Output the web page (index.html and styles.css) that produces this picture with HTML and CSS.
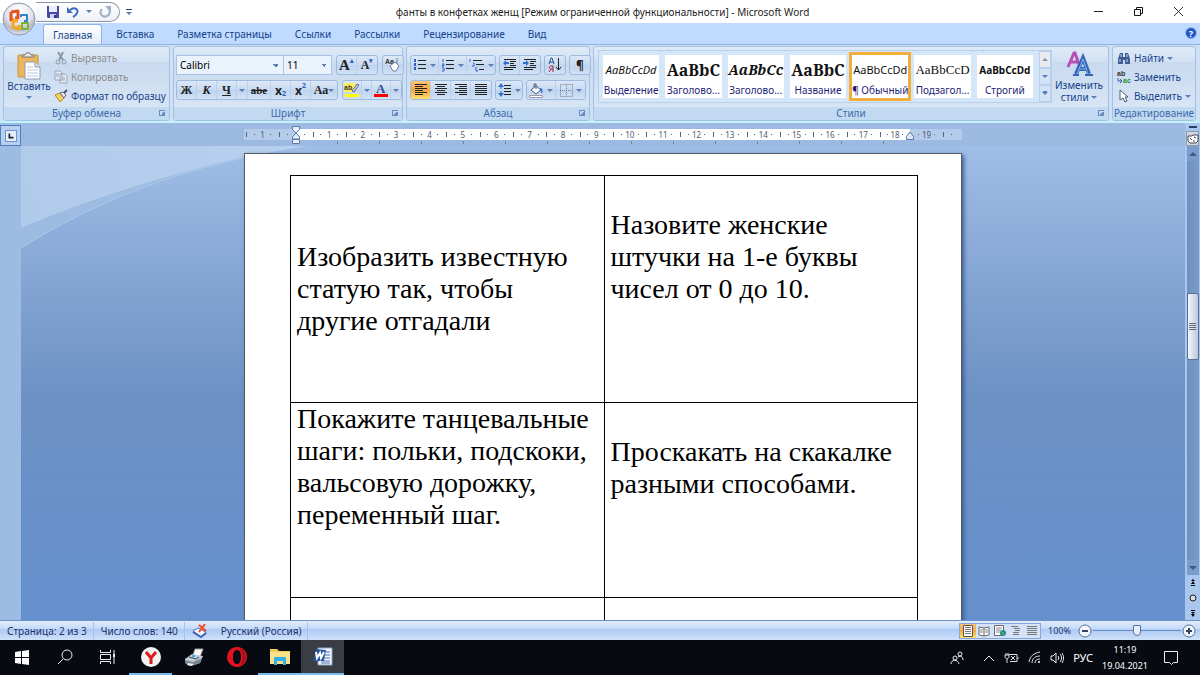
FILE: index.html
```html
<!DOCTYPE html>
<html lang="ru">
<head>
    <meta charset="UTF-8">
    <meta name="viewport" content="width=device-width, initial-scale=1.0">
    <title>фанты в конфетках женщ - Microsoft Word</title>
    <link rel="stylesheet" href="styles.css">
</head>
<body>
    <header class="titlebar">
        <button class="office" aria-label="Office">
            <svg width="36" height="36" viewBox="0 0 36 36">
                <defs>
                    <radialGradient id="orb" cx="50%" cy="25%" r="75%">
                        <stop offset="0" stop-color="#fff"/>
                        <stop offset=".55" stop-color="#e3e6ec"/>
                        <stop offset=".8" stop-color="#b4bac8"/>
                        <stop offset="1" stop-color="#e8ebf2"/>
                    </radialGradient>
                </defs>
                <circle cx="18" cy="18" r="16" fill="url(#orb)" stroke="#8b95ab"/>
                <g fill="none" stroke-linejoin="round">
                    <path d="M10 11l7-1v7h-3M10 11v8h3" stroke="#e4531b" stroke-width="3"/>
                    <path d="M20 16v-2h6v6h-3" stroke="#2f86cf" stroke-width="2"/>
                    <path d="M17 20h-5v6l6 2v-4" stroke="#f3a81c" stroke-width="3"/>
                    <path d="M21 24v-2h6v6h-6z" stroke="#7fb32b" stroke-width="2"/>
                </g>
            </svg>
        </button>
        <div class="quick">
            <button aria-label="Сохранить">
                <svg width="14" height="14" viewBox="0 0 14 14"><path d="M1 1h12v12H2l-1-1z" fill="#4747a8"/><path d="M3 1h8v6H3z" fill="#e9effa"/><path d="M4 9h6v4H4z" fill="#cdd3e6"/><path d="M8 10h2v3H8z" fill="#33337d"/></svg>
            </button>
            <button aria-label="Отменить">
                <svg width="14" height="14" viewBox="0 0 14 14"><path d="M4 5c5-4 9 0 7 3-1 2-2 3-4 4" fill="none" stroke="#3a6cc4" stroke-width="2"/><path d="M1 2v6h6z" fill="#3a6cc4"/></svg>
            </button>
            <i class="arrow"></i>
            <button aria-label="Вернуть">
                <svg width="14" height="14" viewBox="0 0 14 14"><path d="M4 4c-4 5 1 9 5 7 4-2 3-6 1-8" fill="none" stroke="#9fb0cc" stroke-width="2"/><path d="M7 1h6v6z" fill="#9fb0cc"/></svg>
            </button>
        </div>
        <button class="more" aria-label="Настройка панели"><i class="arrow"></i></button>
        <h1 class="title">фанты в конфетках женщ [Режим ограниченной функциональности] - Microsoft Word</h1>
        <div class="winbtns">
            <button aria-label="Свернуть"><svg width="11" height="11" viewBox="0 0 11 11"><path d="M1 5.500h9" stroke="#222"/></svg></button>
            <button aria-label="Восстановить"><svg width="11" height="11" viewBox="0 0 11 11"><path d="M1.500 3.500h6v6h-6zM3.500 3.500v-2h6v6h-2" fill="none" stroke="#111"/></svg></button>
            <button aria-label="Закрыть"><svg width="11" height="11" viewBox="0 0 11 11"><path d="M1 1l9 9M10 1l-9 9" stroke="#333"/></svg></button>
        </div>
    </header>

    <nav class="tabs">
        <a href="#" class="active">Главная</a>
        <a href="#">Вставка</a>
        <a href="#">Разметка страницы</a>
        <a href="#">Ссылки</a>
        <a href="#">Рассылки</a>
        <a href="#">Рецензирование</a>
        <a href="#">Вид</a>
        <button class="help" aria-label="Справка">?</button>
    </nav>

    <div class="ribbon">
        <section class="group clipboard">
            <div class="group-body">
                <button class="big">
                    <svg width="26" height="28" viewBox="0 0 26 28"><rect x="2" y="3" width="20" height="22" rx="1" fill="#ebb75c" stroke="#c9923a"/><path d="M6 5h12V3h-3c0-3-6-3-6 0H6z" fill="#e5e5e5" stroke="#777"/><path d="M9 10h10l5 5v12H9z" fill="#fff" stroke="#8a9bb8"/><path d="M19 10v5h5" fill="#dbe6f5" stroke="#8a9bb8"/><path d="M11 15h6M11 18h11M11 21h11M11 24h11" stroke="#b9c8dd"/></svg>
                    <span>Вставить</span>
                    <i class="arrow"></i>
                </button>
                <div class="stack">
                    <button class="small" disabled>
                        <svg width="14" height="14" viewBox="0 0 14 14"><path d="M4 1l5 8M9 1L5 9" stroke="#8b97a8" stroke-width="2"/><circle cx="4" cy="11" r="2" fill="none" stroke="#8b97a8"/><circle cx="10" cy="11" r="2" fill="none" stroke="#8b97a8"/></svg>
                        Вырезать
                    </button>
                    <button class="small" disabled>
                        <svg width="14" height="14" viewBox="0 0 14 14"><path d="M1 1h5l2 2v7H1zM6 4h5l2 2v7H6z" fill="#e3e9f2" stroke="#98a6ba"/><path d="M8 8h3M8 10h3M2 4h3M2 6h3" stroke="#98a6ba"/></svg>
                        Копировать
                    </button>
                    <button class="small">
                        <svg width="14" height="14" viewBox="0 0 14 14"><path d="M1 6l5-2 4 5-4 4z" fill="#f3d06a" stroke="#b88a27"/><path d="M6 4l3-1 3 3-2 3z" fill="#ececec" stroke="#666"/><path d="M10 4l3-3" stroke="#4b4b8d" stroke-width="2"/></svg>
                        Формат по образцу
                    </button>
                </div>
            </div>
            <h2>Буфер обмена<i class="launcher"></i></h2>
        </section>

        <section class="group font">
            <div class="group-body rows">
                <div class="line">
                    <div class="combos">
                        <select class="font-name" aria-label="Шрифт"><option>Calibri</option></select>
                        <select class="font-size" aria-label="Размер шрифта"><option>11</option></select>
                    </div>
                    <div class="btns">
                        <button class="serif grow" aria-label="Увеличить размер">A<sup>▴</sup></button>
                        <button class="serif shrink" aria-label="Уменьшить размер">A<sup>▾</sup></button>
                    </div>
                    <div class="btns">
                        <button aria-label="Очистить формат"><svg width="16" height="16" viewBox="0 0 16 16"><text x="0" y="7" class="tiny">Aa</text><path d="M5 9l5-4 4 4-3 5H8z" fill="#fff" stroke="#6d7f9d"/><path d="M12 1v6" stroke="#6d7f9d"/></svg></button>
                    </div>
                </div>
                <div class="line">
                    <div class="btns">
                        <button class="serif">Ж</button>
                        <button class="serif"><em>К</em></button>
                        <button class="serif"><u>Ч</u></button>
                        <button class="drop" aria-label="Вид подчеркивания"><i class="arrow"></i></button>
                        <button class="serif strike">abe</button>
                        <button>x<sub>2</sub></button>
                        <button>x<sup>2</sup></button>
                        <button class="serif case">Aa<i class="arrow"></i></button>
                    </div>
                    <div class="btns colors">
                        <button aria-label="Цвет выделения"><svg width="17" height="16" viewBox="0 0 17 16"><path d="M0 1h11v9H0z" fill="#ffef5a"/><text x="0" y="8" class="tiny">ab</text><path d="M8 9l5-7 2 1-5 7z" fill="#c9d4e8" stroke="#5b6d8c"/><path d="M1 12h14v3H1z" fill="#ff0"/></svg></button>
                        <button class="drop" aria-label="Выбрать цвет выделения"><i class="arrow"></i></button>
                        <button aria-label="Цвет текста"><svg width="15" height="16" viewBox="0 0 15 16"><text x="2" y="11" class="letter">A</text><path d="M0 12h14v3H0z" fill="#f00"/></svg></button>
                        <button class="drop" aria-label="Выбрать цвет текста"><i class="arrow"></i></button>
                    </div>
                </div>
            </div>
            <h2>Шрифт<i class="launcher"></i></h2>
        </section>

        <section class="group para">
            <div class="group-body rows">
                <div class="line">
                    <div class="btns">
                        <button aria-label="Маркеры"><svg width="14" height="14" viewBox="0 0 14 14"><path d="M5 2.500h8M5 6.500h8M5 10.500h8" stroke="#222"/><path d="M1 1h2v3H1zM1 5h2v3H1zM1 9h2v3H1z" fill="#2f5fc0"/></svg><i class="arrow"></i></button>
                        <button aria-label="Нумерация"><svg width="14" height="14" viewBox="0 0 14 14"><path d="M5 2.500h8M5 6.500h8M5 10.500h8" stroke="#222"/><path d="M2 1v3M1 6h2v1L1 8h2M1 10h2v3H1" fill="none" stroke="#2f5fc0"/></svg><i class="arrow"></i></button>
                        <button aria-label="Многоуровневый список"><svg width="16" height="14" viewBox="0 0 16 14"><path d="M4 2.500h9M7 6.500h8M10 11.500h5" stroke="#222"/><path d="M1 1v3M4 5h1v3H3M7 9v4h2" fill="none" stroke="#2f5fc0"/></svg><i class="arrow"></i></button>
                    </div>
                    <div class="btns">
                        <button aria-label="Уменьшить отступ"><svg width="14" height="14" viewBox="0 0 14 14"><path d="M1 1.500h12M7 3.500h6M7 5.500h4M7 7.500h6M1 9.500h12M1 11.500h9" stroke="#222"/><path d="M0 5l3-3v2h3v2H3v2z" fill="#2f6fd0"/></svg></button>
                        <button aria-label="Увеличить отступ"><svg width="14" height="14" viewBox="0 0 14 14"><path d="M1 1.500h12M7 3.500h6M7 5.500h4M7 7.500h6M1 9.500h12M1 11.500h9" stroke="#222"/><path d="M6 5L3 2v2H0v2h3v2z" fill="#2f6fd0"/></svg></button>
                    </div>
                    <div class="btns">
                        <button aria-label="Сортировка"><svg width="14" height="16" viewBox="0 0 14 16"><path d="M1 7l2-6h1l2 6M2 5h3" fill="none" stroke="#2f5096"/><path d="M5 15V9H3c-2 0-2 3 0 3h2M3 12l-2 3" fill="none" stroke="#a32638"/><path d="M10.500 1v12M8 10l2.500 3 2.500-3" fill="none" stroke="#222"/></svg></button>
                    </div>
                    <div class="btns">
                        <button aria-label="Непечатаемые знаки">¶</button>
                    </div>
                </div>
                <div class="line">
                    <div class="btns">
                        <button class="on" aria-label="По левому краю"><svg width="14" height="12" viewBox="0 0 14 12"><path d="M1 .5h12M1 2.500h8M1 4.500h12M1 6.500h8M1 8.500h12M1 10.500h8" stroke="#222"/></svg></button>
                        <button aria-label="По центру"><svg width="14" height="12" viewBox="0 0 14 12"><path d="M1 .5h12M3 2.500h8M1 4.500h12M3 6.500h8M1 8.500h12M3 10.500h8" stroke="#222"/></svg></button>
                        <button aria-label="По правому краю"><svg width="14" height="12" viewBox="0 0 14 12"><path d="M1 .5h12M5 2.500h8M1 4.500h12M5 6.500h8M1 8.500h12M5 10.500h8" stroke="#222"/></svg></button>
                        <button aria-label="По ширине"><svg width="14" height="12" viewBox="0 0 14 12"><path d="M1 .5h12M1 2.500h12M1 4.500h12M1 6.500h12M1 8.500h12M1 10.500h12" stroke="#222"/></svg></button>
                    </div>
                    <div class="btns">
                        <button aria-label="Интервал"><svg width="14" height="14" viewBox="0 0 14 14"><path d="M6 2.500h7M6 5.500h7M6 8.500h7M6 11.500h7" stroke="#222"/><path d="M3 0L0 4h6zM3 14l-3-4h6z" fill="#2f6fd0"/><path d="M3 3v3M3 8v3" stroke="#2f6fd0"/></svg><i class="arrow"></i></button>
                    </div>
                    <div class="btns wide">
                        <button aria-label="Заливка"><svg width="15" height="15" viewBox="0 0 15 15"><path d="M2 7l5-4 5 4-5 4z" fill="#f4f7fc" stroke="#47597c"/><path d="M7 6V1H5v3" fill="none" stroke="#47597c"/><path d="M11 5c3 0 3 3 2 6-1-2-1-3-2-4z" fill="#3a70c6"/><path d="M.5 12.500h13v2H.5z" fill="#fff" stroke="#99a"/></svg><i class="arrow"></i></button>
                        <button aria-label="Границы"><svg width="13" height="13" viewBox="0 0 13 13"><path d="M.5.5h12v12H.5zM6.500 0v12M0 6.500h12" fill="none" stroke="#6f7f99" stroke-dasharray="1 1"/></svg><i class="arrow"></i></button>
                    </div>
                </div>
            </div>
            <h2>Абзац<i class="launcher"></i></h2>
        </section>

        <section class="group styles">
            <div class="group-body">
                <div class="gallery">
                    <button class="style"><span class="sample s-em">AaBbCcDd</span><span>Выделение</span></button>
                    <button class="style"><span class="sample s-h1">AaBbC</span><span>Заголово...</span></button>
                    <button class="style"><span class="sample s-h2">AaBbCc</span><span>Заголово...</span></button>
                    <button class="style"><span class="sample s-h1">AaBbC</span><span>Название</span></button>
                    <button class="style current"><span class="sample">AaBbCcDd</span><span>¶ Обычный</span></button>
                    <button class="style"><span class="sample s-sub">AaBbCcD</span><span>Подзагол...</span></button>
                    <button class="style"><span class="sample s-strong">AaBbCcDd</span><span>Строгий</span></button>
                    <div class="scroller">
                        <button disabled aria-label="Вверх"><i class="arrow up"></i></button>
                        <button aria-label="Вниз"><i class="arrow"></i></button>
                        <button class="expand" aria-label="Дополнительно"><i class="arrow"></i></button>
                    </div>
                </div>
                <button class="big change">
                    <svg width="28" height="27" viewBox="0 0 28 27"><path d="M3 17L9 3h1l5 14M6 12h7" fill="none" stroke="#b94fb5" stroke-width="3"/><path d="M11 24l7-16 6 16M14 19h8" fill="none" stroke="#3766b4" stroke-width="4"/><path d="M12 24l6-15 5 15M14 19h8" fill="none" stroke="#7db2ee"/><path d="M8 25h6M20 25h8" stroke="#3766b4" stroke-width="2"/></svg>
                    <span>Изменить<br>стили <i class="arrow"></i></span>
                </button>
            </div>
            <h2>Стили<i class="launcher"></i></h2>
        </section>

        <section class="group edit">
            <div class="group-body">
                <div class="stack">
                    <button class="small">
                        <svg width="14" height="14" viewBox="0 0 14 14"><path d="M3 2h3v4h2V2h3l2 6v5H8V9H6v4H1V8z" fill="#3f5c95"/><path d="M4 3v3M10 3v3M3 8v3M10 8v3" stroke="#c8d8f2"/></svg>
                        Найти <i class="arrow"></i>
                    </button>
                    <button class="small">
                        <svg width="14" height="14" viewBox="0 0 14 14"><text x="0" y="6" class="tiny">ab</text><text x="6" y="13" class="tiny green">ac</text><path d="M1 8v3h4M3 9l2 2-2 2" fill="none" stroke="#2f5fc0"/></svg>
                        Заменить
                    </button>
                    <button class="small">
                        <svg width="14" height="14" viewBox="0 0 14 14"><path d="M3 1v10l3-2 2 4 2-1-2-4h3z" fill="#fff" stroke="#4a5a78"/></svg>
                        Выделить <i class="arrow"></i>
                    </button>
                </div>
            </div>
            <h2>Редактирование</h2>
        </section>
    </div>

    <main class="workspace">
        <div class="vruler">
            <button class="tabstop" aria-label="Табуляция"><svg width="12" height="12" viewBox="0 0 12 12"><path d="M4 3v5h5" fill="none" stroke="#223" stroke-width="2"/></svg></button>
        </div>
        <div class="canvas">
            <div class="ruler-strip">
                <div class="ruler">
                    <div class="margin left"><b>1</b></div>
                    <svg class="indent" width="10" height="20" viewBox="0 0 10 20"><path d="M1.500 1.500h7v3L5 8l3.500 4v2h-7v-2L5 8 1.500 4.500zM1.500 14.500h7v4h-7z" fill="#e8effa" stroke="#5d7aab"/></svg>
                    <div class="scale">
                        <b class="first"></b><b>1</b><b>2</b><b>3</b><b>4</b><b>5</b><b>6</b><b>7</b><b>8</b><b>9</b><b>10</b><b>11</b><b>12</b><b>13</b><b>14</b><b>15</b><b>16</b><b>17</b><b class="last">18</b>
                    </div>
                    <svg class="indent right" width="10" height="20" viewBox="0 0 10 20"><path d="M1.500 14.500v-3L5 7l3.500 4.500v3z" fill="#dce7f7" stroke="#5d7aab"/></svg>
                    <div class="margin right"><b>19</b></div>
                </div>
            </div>
            <div class="desk">
                <svg class="swoosh" viewBox="0 0 300 110" width="300" height="110">
                    <defs><linearGradient id="light"><stop offset="0" stop-color="#b4cdec"/><stop offset="1" stop-color="#bcd3f1"/></linearGradient></defs>
                    <path d="M0 102C75 55 150 28 222 12L290 0H0z" fill="#a3c0e3" fill-opacity=".7"/>
                    <path d="M0 102C75 55 150 28 222 12" fill="none" stroke="#adc8ea"/>
                    <path d="M0 82C75 50 150 28 222 11L285 0H0z" fill="url(#light)" fill-opacity=".85"/>
                </svg>
                <article class="page">
                    <table>
                        <tr class="r1">
                            <td>Изобразить известную статую так, чтобы другие отгадали</td>
                            <td class="raised">Назовите женские штучки на 1-е буквы чисел от 0 до 10.</td>
                        </tr>
                        <tr class="r2">
                            <td class="top">Покажите танцевальные шаги: польки, подскоки, вальсовую дорожку, переменный шаг.</td>
                            <td class="raised">Проскакать на скакалке разными способами.</td>
                        </tr>
                        <tr class="r3">
                            <td></td>
                            <td></td>
                        </tr>
                    </table>
                </article>
            </div>
        </div>
        <div class="vscroll">
            <i class="splitter"></i>
            <button class="ruler-btn" aria-label="Линейка"><svg width="12" height="12" viewBox="0 0 12 12"><path d="M1 3h4l1-1h5v6l-2 2H3L1 8z" fill="#fff" stroke="#445"/><path d="M3 5l2 2M7 4l2 1M6 8h2" stroke="#445"/></svg></button>
            <button class="step" aria-label="Вверх"><i class="arrow up"></i></button>
            <div class="track"><div class="thumb"></div></div>
            <button class="step" aria-label="Вниз"><i class="arrow"></i></button>
            <button class="nav" aria-label="Предыдущая страница"><svg width="8" height="8" viewBox="0 0 8 8"><path d="M4 0l2 2H2zM4 2l2 3H2zM2 6h4v1H2z"/></svg></button>
            <button class="nav" aria-label="Выбор объекта"><svg width="8" height="8" viewBox="0 0 8 8"><circle cx="4" cy="4" r="3" fill="#ddd" stroke="#222"/></svg></button>
            <button class="nav" aria-label="Следующая страница"><svg width="8" height="8" viewBox="0 0 8 8"><path d="M2 1h4v1H2zM2 3h4L4 5zM2 5h4L4 8z"/></svg></button>
        </div>
    </main>

    <footer class="status">
        <span class="cell">Страница: 2 из 3</span>
        <span class="cell">Число слов: 140</span>
        <span class="cell spell"><svg width="16" height="14" viewBox="0 0 16 14"><path d="M1 7l5-3 8 4-5 5z" fill="#f4f7fd" stroke="#4a6caf"/><path d="M1 8l8 5 5-4" fill="none" stroke="#3c62b0" stroke-width="2"/><path d="M7 1l7 6M13 0L7 8" stroke="#ef4b25" stroke-width="2"/></svg></span>
        <span class="cell lang">Русский (Россия)</span>
        <div class="views">
            <button class="on" aria-label="Разметка страницы"><svg width="12" height="12" viewBox="0 0 12 12"><path d="M1.500.5h9v11h-9z" fill="#fff" stroke="#555"/><path d="M3 2.500h6M3 4.500h6M3 6.500h6M3 8.500h6" stroke="#777"/></svg></button>
            <button aria-label="Режим чтения"><svg width="12" height="12" viewBox="0 0 12 12"><path d="M1 2l5 1 5-1v8l-5 1-5-1zM6 3v8" fill="#fff" stroke="#666"/><path d="M2 5h3M2 7h3M7 5h3M7 7h3" stroke="#888"/></svg></button>
            <button aria-label="Веб-документ"><svg width="12" height="12" viewBox="0 0 12 12"><path d="M.5.5h9v10h-9z" fill="#fff" stroke="#666"/><path d="M2 3h6M2 5h5M2 7h4" stroke="#888"/><circle cx="9" cy="8" r="3" fill="#268a8d"/><path d="M7 7l2 1 1 2" stroke="#69c36a" fill="none"/></svg></button>
            <button aria-label="Структура"><svg width="12" height="12" viewBox="0 0 12 12"><path d="M1 1.500h7M4 3.500h6M5 5.500h5M3 7.500h6M3 9.500h6" stroke="#777"/></svg></button>
            <button aria-label="Черновик"><svg width="12" height="12" viewBox="0 0 12 12"><path d="M1 1.500h10M1 3.500h10M1 5.500h10M1 7.500h10M1 9.500h10" stroke="#777"/></svg></button>
        </div>
        <span class="percent">100%</span>
        <button class="zoom-btn" aria-label="Уменьшить"><svg width="14" height="14" viewBox="0 0 14 14"><circle cx="7" cy="7" r="6" fill="#f2f6fc" stroke="#566f99"/><path d="M4 7h6" stroke="#34445f" stroke-width="2"/></svg></button>
        <input class="zoom" type="range" min="0" max="100" value="50" aria-label="Масштаб">
        <button class="zoom-btn" aria-label="Увеличить"><svg width="14" height="14" viewBox="0 0 14 14"><circle cx="7" cy="7" r="6" fill="#f2f6fc" stroke="#566f99"/><path d="M4 7h6M7 4v6" stroke="#34445f" stroke-width="2"/></svg></button>
    </footer>

    <div class="taskbar">
        <button aria-label="Пуск"><svg width="16" height="16" viewBox="0 0 16 16"><path d="M1 3l6-1v6H1zM8 2l7-1v7H8zM1 9h6v6l-6-1zM8 9h7v7l-7-1z" fill="#fff"/></svg></button>
        <button aria-label="Поиск"><svg width="16" height="16" viewBox="0 0 16 16"><circle cx="10" cy="6" r="5" fill="none" stroke="#eee"/><path d="M6 10l-5 5" stroke="#eee"/></svg></button>
        <button aria-label="Представление задач"><svg width="16" height="16" viewBox="0 0 16 16"><path d="M.5 1v2.500h10V1M.5 15v-2.500h10V15M.5 5.500h10v5H.5z" fill="none" stroke="#eee"/><path d="M14 1v14" stroke="#eee"/><path d="M13 5h2v3h-2z" fill="#eee"/></svg></button>
        <button class="open" aria-label="Яндекс"><svg width="20" height="20" viewBox="0 0 20 20"><circle cx="10" cy="10" r="10" fill="#f1f1f1"/><path d="M5 5l5 6 5-6M10 10v7" fill="none" stroke="#e0161d" stroke-width="3"/></svg></button>
        <button aria-label="Принтер"><svg width="20" height="18" viewBox="0 0 20 18"><path d="M9 7l2-6 8 0-3 8z" fill="#f7f7f7" stroke="#999"/><path d="M1 11l7-5 11 2-3 7-9 3-6-3z" fill="#c5ccd4"/><path d="M1 12l8 2 9-4-2 5-9 3-6-3z" fill="#7b8792"/><path d="M5 9l7 2 3-2" fill="none" stroke="#33485c"/><path d="M4 15l6 1-3 2-4-1z" fill="#eee"/><path d="M8 8h3" stroke="#48a4dc" stroke-width="2"/></svg></button>
        <button aria-label="Opera"><svg width="20" height="20" viewBox="0 0 20 20"><path d="M10 0a10 10 0 1 0 .1 0zM10 3c3 0 4 3 4 7s-1 7-4 7-4-3-4-7 1-7 4-7z" fill="#e0131f" fill-rule="evenodd"/><path d="M12 1c9 2 9 16 0 18 5-4 5-14 0-18z" fill="#a3101a"/></svg></button>
        <button class="open" aria-label="Проводник"><svg width="20" height="18" viewBox="0 0 20 18"><path d="M0 1h7l2 2h11v13H0z" fill="#f4cc5c"/><path d="M0 4h20v12H0z" fill="#fbe08a"/><path d="M4 17V9h12v8h-3v-4H7v4z" fill="#35b0ea"/></svg></button>
        <button class="open front" aria-label="Word"><svg width="20" height="20" viewBox="0 0 20 20"><path d="M5 1h14v17H5z" fill="#f4f7fc" stroke="#8aa4d0"/><path d="M12 5h5M12 8h5M12 11h5M8 14h9M8 16h9" stroke="#4a71b8"/><path d="M3 2l10 1-2 11-11 0z" fill="#2c569f"/><path d="M3 5l1 6 3-5 1 5 3-6" fill="none" stroke="#fff" stroke-width="2"/></svg></button>
        <div class="tray">
            <svg class="people" width="14" height="14" viewBox="0 0 14 14"><g fill="none" stroke="#eee"><circle cx="10" cy="3" r="2"/><circle cx="5" cy="7" r="2"/><path d="M1 13c0-5 7-5 8 0M8 6c3-2 5 0 5 3"/></g></svg>
            <svg width="12" height="8" viewBox="0 0 12 8"><path d="M1 7l5-5 5 5" fill="none" stroke="#eee"/></svg>
            <svg width="15" height="12" viewBox="0 0 15 12"><path d="M5 2.500h8v7H6M14 5v2M1 3h4v2c0 2-4 2-4 0zM3 7v4M2 1v2M4 1v2M7 4l4 4M11 4l-4 4" fill="none" stroke="#ddd"/></svg>
            <svg width="13" height="13" viewBox="0 0 13 13"><path d="M1 11C2 5 6 2 12 1M4 12c0-5 4-7 8-7M7 12c0-3 2-4 5-4" fill="none" stroke="#ddd"/><circle cx="11" cy="11" r="1" fill="#fff"/></svg>
            <svg width="14" height="12" viewBox="0 0 14 12"><path d="M1 4h2l3-3v10L3 8H1zM8 4c1 1 1 3 0 4M10 2c2 2 2 6 0 8M12 1c2 3 2 7 0 10" fill="none" stroke="#eee"/></svg>
            <span>РУС</span>
            <div class="clock"><span>11:19</span><span>19.04.2021</span></div>
            <svg class="note" width="16" height="16" viewBox="0 0 16 16"><path d="M1.500 1.500h13v11h-4l-2 2-2-2h-5z" fill="none" stroke="#eee"/></svg>
        </div>
    </div>
</body>
</html>
```
FILE: styles.css
```css
* {
    box-sizing: border-box;
}

body {
    margin: 0;
    height: 100vh;
    display: flex;
    flex-direction: column;
    overflow: hidden;
    font-family: "Noto Sans", "Open Sans", sans-serif;
    font-size: 10px;
    color: #15428b;
    background: #bfdbff;
}

button {
    display: flex;
    align-items: center;
    justify-content: center;
    padding: 0;
    border: none;
    background: none;
    font: inherit;
    color: inherit;
    white-space: nowrap;
}

h1, h2 {
    margin: 0;
    font-size: inherit;
    font-weight: normal;
}

svg {
    flex: none;
}

.arrow {
    display: inline-block;
    flex: none;
    border: 3px solid transparent;
    border-top: 3px solid #5a7fb8;
    border-bottom: none;
}

.arrow.up {
    border-top: none;
    border-bottom: 3px solid #8a94a4;
}

/* title bar */

.titlebar {
    position: relative;
    display: flex;
    align-items: center;
    height: 23px;
    background: #fff;
}

.office {
    position: absolute;
    left: 1px;
    top: 1px;
    z-index: 2;
}

.quick {
    display: flex;
    align-items: center;
    gap: 6px;
    height: 20px;
    margin-left: 36px;
    padding: 0 7px 0 10px;
    border: 1px solid #8d97a8;
    border-left: none;
    border-radius: 0 10px 10px 0;
    background: linear-gradient(#fff, #eef1f6);
}

.more {
    margin-left: 6px;
    padding-top: 2px;
    border-top: 1px solid #15428b;
}

.title {
    flex: 1;
    padding-right: 20px;
    text-align: center;
    color: #222;
}

.winbtns {
    display: flex;
    gap: 29px;
    padding-right: 16px;
}

/* tabs */

.tabs {
    display: flex;
    height: 21px;
    padding: 1px 3px 0 43px;
    background: #bfdbff;
}

.tabs a {
    display: flex;
    align-items: center;
    padding: 0 9px;
    margin-right: 5px;
    color: #15428b;
    text-decoration: none;
}

.tabs .active {
    border: 1px solid #8db2e3;
    border-bottom: none;
    border-radius: 3px 3px 0 0;
    background: linear-gradient(#fff, #e3edf9);
}

.help {
    width: 12px;
    height: 12px;
    margin: 3px 0 0 auto;
    border-radius: 50%;
    border: 1px solid #9dbdf0;
    background: #1f57c8;
    color: #fff;
    font-size: 9px;
    font-weight: bold;
}

/* ribbon */

.ribbon {
    display: flex;
    gap: 3px;
    height: 79px;
    padding: 1px 4px 0 3px;
    border-top: 1px solid #8db2e3;
    border-bottom: 2px solid #c4f2fc;
    background: #cfe0f5;
}

.group {
    display: flex;
    flex: none;
    flex-direction: column;
    border: 1px solid #a3c1e4;
    border-radius: 3px;
    background: linear-gradient(#dfeaf6, #d1e1f3 20%, #c9daef 21%, #dbe8f6);
}

.group-body {
    flex: 1;
    display: flex;
    min-height: 0;
}

.group h2 {
    position: relative;
    height: 13px;
    line-height: 13px;
    text-align: center;
    color: #3e6aaa;
    background: #c1d9f1;
}

.launcher {
    position: absolute;
    right: 4px;
    top: 3px;
    width: 6px;
    height: 6px;
    border-top: 1px solid #6a8cc0;
    border-left: 1px solid #6a8cc0;
    background: linear-gradient(135deg, transparent 50%, #6a8cc0 50%);
}

.clipboard { width: 167px; }
.font { width: 230px; }
.para { width: 184px; }
.styles { flex: 1; min-width: 0; }
.edit { width: 84px; }

.big {
    flex-direction: column;
    justify-content: flex-start;
    width: 50px;
    padding-top: 5px;
    line-height: 12px;
}

.big > .arrow {
    margin-top: 4px;
}

.stack {
    display: flex;
    flex-direction: column;
    gap: 5px;
    padding-top: 4px;
}

.small {
    justify-content: flex-start;
    gap: 3px;
    height: 14px;
}

.small:disabled {
    color: #8d8d8d;
}

.rows {
    flex-direction: column;
    gap: 5px;
    padding: 8px 2px 0;
}

.line {
    display: flex;
    gap: 4px;
}

.btns {
    display: flex;
    height: 20px;
    border: 1px solid #9dbbe0;
    border-radius: 3px;
    background: linear-gradient(#dbe8f8, #c8daf1 50%, #bed3ee 51%, #d2e2f6);
    color: #222;
    font-size: 12px;
    font-weight: bold;
}

.btns button {
    width: 20px;
    border-right: 1px solid #b9cfeb;
}

.btns button:last-child {
    border-right: none;
}

.btns .drop {
    width: 11px;
}

.btns.colors button {
    width: 19px;
}

.btns.colors .drop {
    width: 10px;
}

.btns .on, .views .on {
    background: linear-gradient(#f8c27a, #f5a842 50%, #ffdf72);
}

.btns sup, .btns sub {
    font-size: 7px;
    line-height: 10px;
    color: #2f5fc0;
}

.btns sub {
    align-self: flex-end;
}

.btns sup {
    align-self: flex-start;
}

.para .rows {
    padding-left: 3px;
}

.para .line {
    gap: 3px;
}

.para .btns .arrow {
    margin-left: 3px;
}

.para .line:first-child .btns:first-child button {
    width: 28px;
}

.para .line:last-child .btns:nth-child(2) button {
    width: 26px;
}

.para .wide button {
    width: 29px;
}

.serif {
    font-family: "Liberation Serif", serif;
    font-weight: bold;
}

.btns .grow {
    font-size: 15px;
}

.btns .strike {
    width: 23px;
    font-size: 11px;
    text-decoration: line-through;
}

.btns .case {
    width: 26px;
}

.tiny {
    font: bold 7px "Liberation Sans", sans-serif;
    fill: #333;
}

.green {
    fill: #2a9133;
}

.letter {
    font: bold 13px "Liberation Serif", serif;
    fill: #2f4f93;
}

.combos {
    display: flex;
    height: 20px;
}

select {
    appearance: none;
    height: 20px;
    padding: 0 3px;
    border: 1px solid #a9c3e6;
    border-radius: 0;
    background: #eaf2fb conic-gradient(from -45deg at 50% 100%, #5a7fb8 90deg, transparent 0) no-repeat right 4px center / 6px 3px;
    font: 10px "Noto Sans", sans-serif;
    color: #000;
}

.font-name { width: 108px; }
.font-size { width: 48px; border-left: none; }

/* style gallery */

.styles .group-body {
    padding: 3px 2px 0 4px;
}

.gallery {
    flex: 1;
    display: flex;
    gap: 6px;
    min-width: 0;
    height: 53px;
    padding-left: 4px;
    border: 1px solid #b9d0ed;
    background: #d4e6f8;
}

.style {
    flex: 1;
    min-width: 0;
    flex-direction: column;
    justify-content: flex-end;
    gap: 2px;
    height: 43px;
    margin-top: 4px;
    padding-bottom: 1px;
    background: #fff;
    line-height: 14px;
    color: #1e1e78;
}

.style.current {
    outline: 3px solid #f0ae3d;
    outline-offset: 0;
}

.sample {
    height: 22px;
    line-height: 22px;
    font-size: 11px;
    color: #111;
}

.s-em { font-style: italic; }
.s-strong { font-size: 10px; font-weight: bold; }

.s-h1, .s-h2 {
    font-family: "Noto Serif", "Liberation Serif", serif;
    font-weight: bold;
    font-size: 16px;
}

.s-h2 {
    font-size: 14px;
    font-style: italic;
}

.s-sub {
    font-family: "Liberation Serif", serif;
    font-size: 13px;
}

.scroller {
    display: flex;
    flex-direction: column;
    width: 12px;
}

.scroller button {
    flex: 1;
    border: 1px solid #b9d0ed;
    background: #d3e3f6;
}

.scroller button:disabled {
    background: #e9ebef;
}

.expand .arrow {
    box-shadow: 0 -2px 0 -1px #5a7fb8;
}

.change {
    width: 54px;
    padding-top: 0;
    gap: 2px;
}

.change .arrow {
    margin-bottom: 2px;
}

.edit .stack {
    padding-left: 4px;
}

/* document area */

.workspace {
    flex: 1;
    display: flex;
    min-height: 0;
    background: #9bb9e1;
}

.vruler {
    width: 21px;
    padding-top: 2px;
    background: #9dbbe3;
}

.tabstop {
    width: 21px;
    height: 21px;
    border: 1px solid #4f7bc8;
    background: #b9cfee;
}

.tabstop svg {
    border: 1px solid #6d93d4;
    background: #e4eefb;
}

.canvas {
    flex: 1;
    display: flex;
    flex-direction: column;
    min-width: 0;
}

.ruler-strip {
    display: flex;
    justify-content: center;
    height: 23px;
    padding-top: 6px;
}

.ruler {
    position: relative;
    display: flex;
    width: 100%;
    max-width: 718px;
    height: 11px;
}

.ruler b {
    flex: 10;
    text-align: center;
    font-size: 8px;
    font-weight: normal;
    line-height: 11px;
    color: #4d5a70;
    background:
        linear-gradient(#56637a, #56637a) no-repeat 0 50% / 1px 5px,
        linear-gradient(#56637a, #56637a) no-repeat 24% 50% / 1px 1px,
        linear-gradient(#56637a, #56637a) no-repeat 76% 50% / 1px 1px;
}

.ruler .first {
    flex: 5;
    background: linear-gradient(#56637a, #56637a) no-repeat 50% 50% / 1px 1px;
}

.ruler .last {
    flex: 9;
}

.margin {
    display: flex;
    width: 52px;
    background: #b4cbea;
}

.margin b {
    flex: none;
    width: 33px;
    margin-left: 2px;
}

.margin::after {
    content: "";
    width: 10px;
    background:
        linear-gradient(#56637a, #56637a) no-repeat 0 50% / 1px 5px,
        linear-gradient(#56637a, #56637a) no-repeat 8px 50% / 1px 1px;
}

.margin.right b {
    margin-left: 0;
}

.scale {
    position: relative;
    flex: 1;
    display: flex;
    background: #fff;
}

/* default tab stops under the ruler */
.scale::after {
    content: "";
    position: absolute;
    left: 0;
    right: 0;
    top: 12px;
    height: 3px;
    background: repeating-linear-gradient(90deg, transparent 0 41px, #7a8494 41px 42px);
}

.indent {
    position: absolute;
    left: 47px;
    top: -4px;
    z-index: 1;
}

.indent.right {
    left: auto;
    right: 47px;
}

.desk {
    position: relative;
    flex: 1;
    display: flex;
    justify-content: center;
    min-height: 0;
    padding-top: 7px;
    overflow: hidden;
    background: linear-gradient(#9fbee7, #92b0dc 15%, #6d92c4 52%, #6590cd);
}

.swoosh {
    position: absolute;
    left: 0;
    top: 0;
}

.page {
    position: relative;
    width: 100%;
    max-width: 718px;
    height: 900px;
    padding: 21px 43px 0 45px;
    border: 1px solid #555c68;
    background: #fff;
    box-shadow: 2px 2px 4px #3d5f93;
}

.page table {
    width: 100%;
    table-layout: fixed;
    border-collapse: collapse;
    font-family: "Liberation Serif", serif;
    font-size: 28px;
    line-height: 32px;
    color: #000;
}

.page td {
    padding: 0 6px;
    border: 1px solid #000;
    vertical-align: middle;
}

.page .top {
    vertical-align: top;
}

.page .raised {
    padding-bottom: 64px;
}

.r1 { height: 227px; }
.r2 { height: 195px; }
.r3 { height: 227px; }

/* vertical scroll bar */

.vscroll {
    display: flex;
    flex-direction: column;
    align-items: center;
    width: 15px;
    padding-top: 3px;
    background: #a9c6ee;
}

.splitter {
    width: 8px;
    height: 2px;
    margin-bottom: 3px;
    background: #2a3c60;
}

.ruler-btn {
    width: 13px;
    height: 15px;
    background: #d3d6dc;
    border: 1px solid #8d9ab0;
}

.step {
    width: 12px;
    height: 15px;
    background: #7a9cca;
}

.step .arrow {
    border-width: 4px;
    border-top: 4px solid #44597f;
    border-bottom: none;
}

.step .arrow.up {
    border-top: none;
    border-bottom: 4px solid #44597f;
}

.track {
    flex: 1;
    display: flex;
    flex-direction: column;
    align-items: center;
    width: 12px;
    padding-top: 132px;
    background: linear-gradient(90deg, #6f90bd, #7b9cc9);
}

.thumb {
    width: 12px;
    height: 67px;
    border: 1px solid #5b6f94;
    border-radius: 2px;
    background:
        repeating-linear-gradient(#667 0 1px, transparent 1px 2px) no-repeat center / 7px 7px,
        linear-gradient(90deg, #f4f7fb, #b9c9df);
}

.nav {
    width: 12px;
    height: 15px;
}

/* status bar */

.status {
    display: flex;
    align-items: center;
    height: 20px;
    padding-right: 4px;
    border-top: 1px solid #6a92cc;
    background: linear-gradient(#e2edfc, #c5dbf9 40%, #adcaf4 45%, #cfe1fa);
    color: #1e2f6b;
}

.cell {
    display: flex;
    align-items: center;
    height: 18px;
    padding: 0 6px 0 7px;
    border-right: 1px solid #a5c2ea;
}

.spell {
    border-right: none;
}

.lang {
    margin-right: auto;
}

.views {
    display: flex;
    height: 16px;
    border: 1px solid #87a8d8;
    background: #d3e2f7;
}

.views button {
    width: 16px;
}

.percent {
    padding: 0 7px;
    font-size: 9px;
}

.zoom {
    appearance: none;
    width: 88px;
    height: 14px;
    margin: 0 1px;
    background: linear-gradient(#6e8fc2, #6e8fc2) no-repeat center / 100% 1px;
}

.zoom::-webkit-slider-thumb {
    appearance: none;
    width: 8px;
    height: 11px;
    border: 1px solid #56709e;
    border-radius: 1px 1px 4px 4px;
    background: #e8effa;
}

/* taskbar */

.taskbar {
    display: flex;
    height: 35px;
    background: #070a10;
    color: #fff;
}

.taskbar > button {
    width: 43px;
    border-bottom: 2px solid transparent;
}

.taskbar .open {
    border-bottom-color: #76b9ed;
    background-clip: padding-box;
}

.taskbar .front {
    background-color: #3a3e44;
}

.tray {
    display: flex;
    align-items: center;
    gap: 9px;
    margin-left: auto;
    padding-right: 21px;
    font-size: 11px;
}

.people {
    margin-right: 10px;
}

.clock {
    display: flex;
    flex-direction: column;
    align-items: center;
    font-size: 9px;
    line-height: 16px;
}

.note {
    margin-left: 6px;
}
```
